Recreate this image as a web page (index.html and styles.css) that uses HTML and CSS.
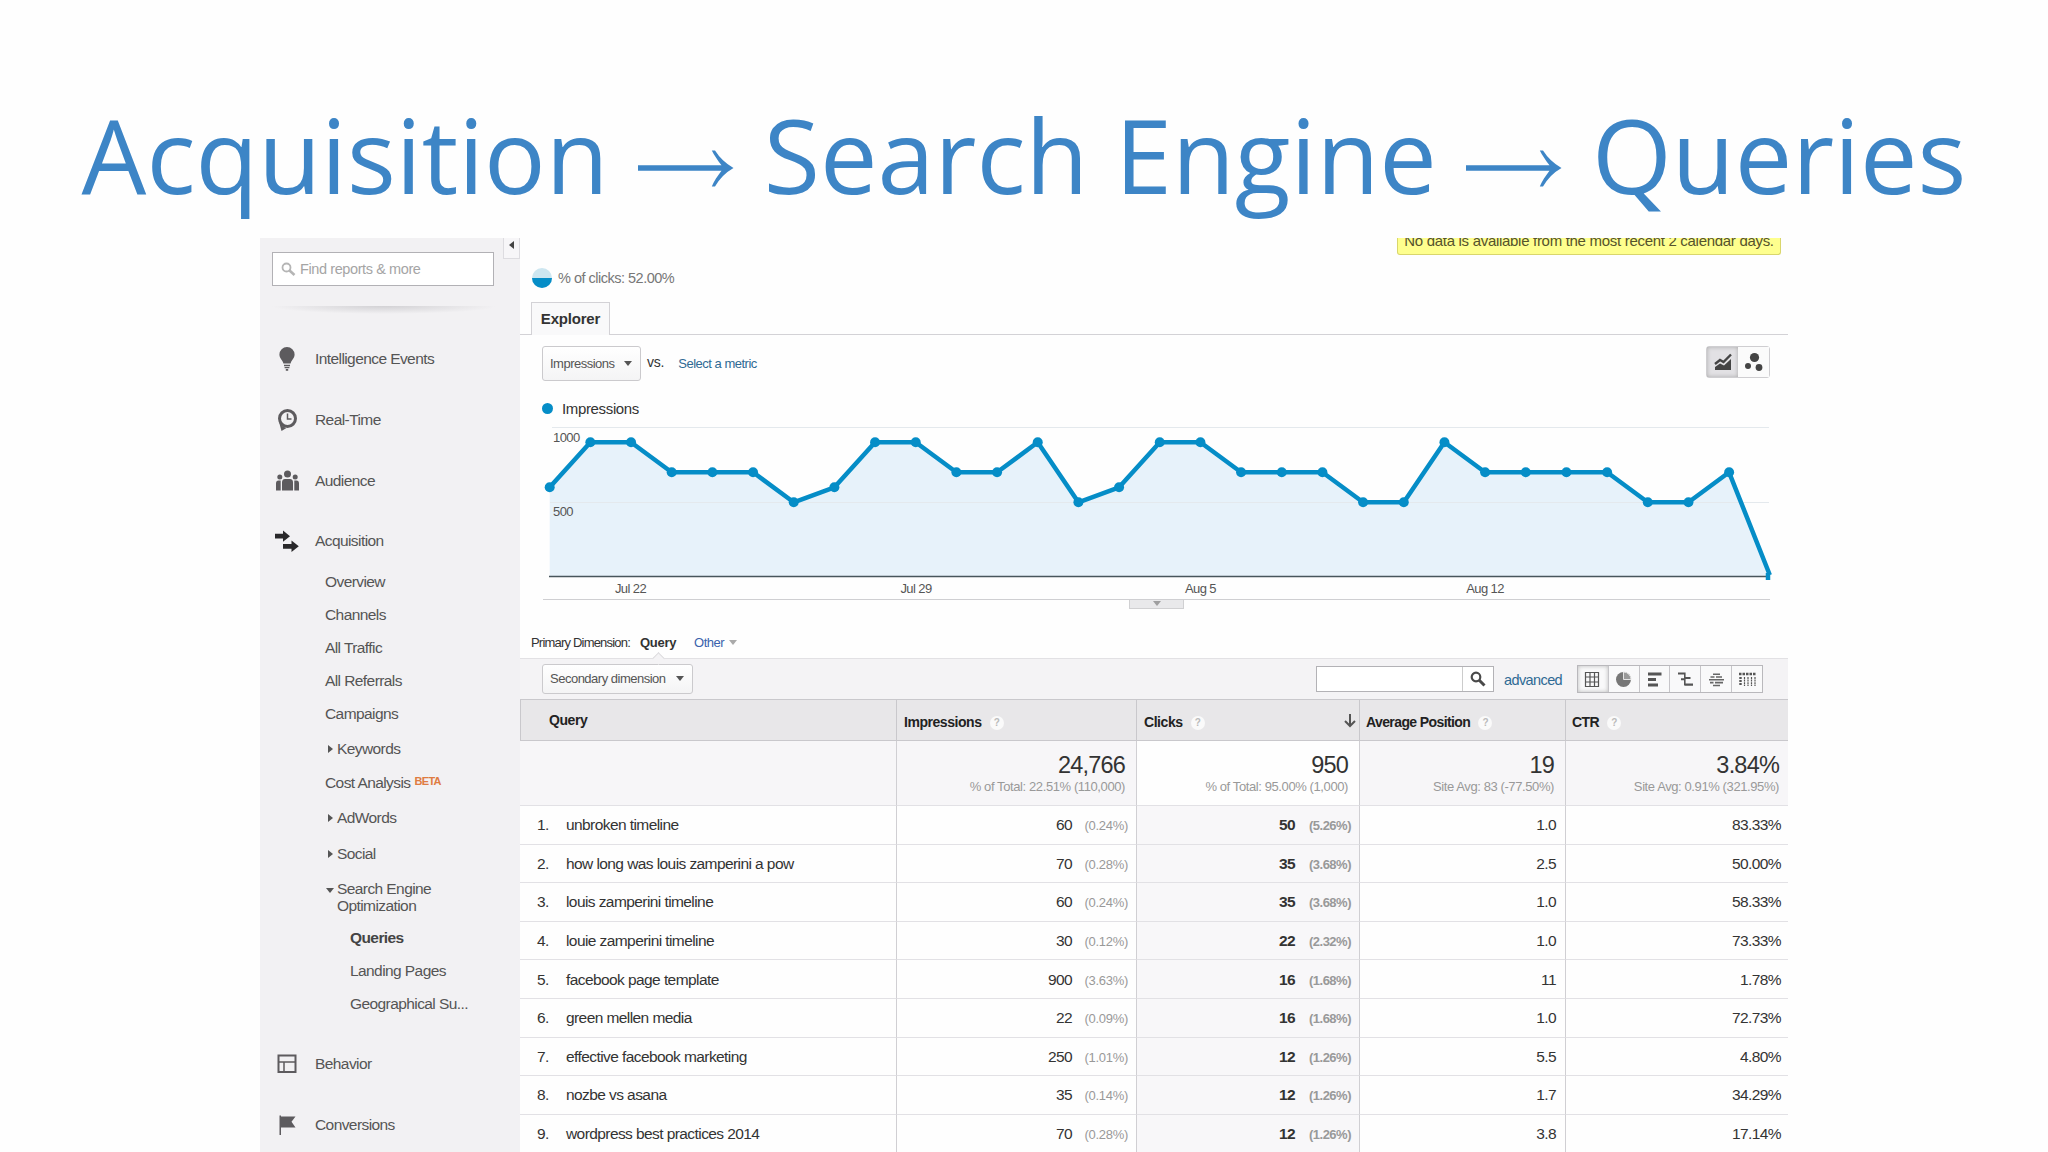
FILE: index.html
```html
<!DOCTYPE html>
<html lang="en">
<head>
  <meta charset="UTF-8">
  <meta name="viewport" content="width=device-width,initial-scale=1.0">
  <title>Acquisition → Search Engine → Queries</title>
  <link rel="stylesheet" href="styles.css">
</head>
<body>

  <h1>
    Acquisition
    <svg class="arrow" width="102" height="46" viewBox="0 0 102 46"><path d="M3 17.300h83.500C82.500 12 79 7 76.800 2.500H80Q87 13.500 98.500 20 87 26.500 80 38.500h-3.200C79 33 82.500 28 86.500 22.700H3z"/></svg>
    Search Engine
    <svg class="arrow" width="102" height="46" viewBox="0 0 102 46"><path d="M3 17.300h83.500C82.500 12 79 7 76.800 2.500H80Q87 13.500 98.500 20 87 26.500 80 38.500h-3.200C79 33 82.500 28 86.500 22.700H3z"/></svg>
    Queries
  </h1>

  <div class="app">
    <!-- Sidebar -->
    <aside class="sidebar">
      <div class="collapse"><svg width="5" height="8" viewBox="0 0 5 8"><path d="M5 0v8L0 4z" fill="#444"/></svg></div>
      <div class="find">
        <svg width="15" height="15" viewBox="0 0 15 15" fill="none" stroke="#b5b5b5"><circle cx="5.5" cy="5.5" r="4" stroke-width="1.8"/><path d="M8.5 8.5l5 4.5" stroke-width="2.6"/></svg>
        <span>Find reports &amp; more</span>
      </div>
      <div class="shade"></div>

      <nav>
        <div class="nav-item">
          <svg width="24" height="24" viewBox="0 0 24 24" fill="#5d5b5e"><path d="M12 0a7.6 7.6 0 0 1 7.6 7.6c0 3.6-3 5.400-4 8.800H8.400C7.400 13 4.400 11.200 4.400 7.600A7.600 7.600 0 0 1 12 0zM9 17.800h6v1.400H9zM9.600 20h4.800v1.200H9.600zM10.800 22h2.400v1.800h-2.400z"/></svg>
          Intelligence Events
        </div>
        <div class="nav-item">
          <svg width="24" height="24" viewBox="0 0 24 24"><circle cx="12.500" cy="10.500" r="8" fill="none" stroke="#5d5b5e" stroke-width="3"/><path d="M4 14l4 4.500 3.500 1.500-5 3z" fill="#5d5b5e"/><path d="M12.500 5.500v5.500h4" fill="none" stroke="#5d5b5e" stroke-width="1.500"/></svg>
          Real-Time
        </div>
        <div class="nav-item">
          <svg width="24" height="24" viewBox="0 0 24 24" fill="#5d5b5e"><circle cx="12.500" cy="5" r="3.500"/><circle cx="4.800" cy="8" r="2.500"/><circle cx="20.200" cy="8" r="2.500"/><path d="M7 21.500v-8q0-3.500 3-3.500h5q3 0 3 3.500v8zM1 21.500v-7q0-3 2.500-3h2.200v10zM24 21.500v-7q0-3-2.500-3h-2.200v10z"/></svg>
          Audience
        </div>
        <div class="nav-item open">
          <svg width="24" height="24" viewBox="0 0 24 24" fill="#29282a"><path d="M0 4.800h8V1.500l7 5.700-7 5.600V9.600H0zM8 15h8.500v-3.500l7.300 5.800-7.300 5.700v-3.300H8z"/></svg>
          Acquisition
        </div>
        <ul class="sub">
          <li>Overview</li>
          <li>Channels</li>
          <li>All Traffic</li>
          <li>All Referrals</li>
          <li>Campaigns</li>
          <li class="group"><i class="tri-right"></i>Keywords</li>
          <li class="cost">Cost Analysis<b class="beta">BETA</b></li>
          <li class="group"><i class="tri-right"></i>AdWords</li>
          <li class="group"><i class="tri-right"></i>Social</li>
          <li class="group seo"><i class="tri-down"></i><span>Search Engine<br>Optimization</span></li>
          <li class="leaf active">Queries</li>
          <li class="leaf">Landing Pages</li>
          <li class="leaf">Geographical Su...</li>
        </ul>
        <div class="nav-item">
          <svg width="24" height="24" viewBox="0 0 24 24" fill="none" stroke="#5d5b5e"><rect x="3.500" y="3.500" width="17" height="16.500" stroke-width="2"/><path d="M3 10h18M9 10v10" stroke-width="1.500"/></svg>
          Behavior
        </div>
        <div class="nav-item">
          <svg width="24" height="24" viewBox="0 0 24 24" fill="#5d5b5e"><path d="M4.500 2.500H6V22H4.500z"/><path d="M6 3.500h14.500l-4 5.300 4 5.700H6z"/></svg>
          Conversions
        </div>
      </nav>
    </aside>

    <!-- Report -->
    <main>
      <div class="top">
        <div class="clicks">
          <svg width="20" height="20" viewBox="0 0 20 20"><circle cx="10" cy="10" r="10" fill="#cde6f0"/><path d="M0 10a10 10 0 0 0 20 0z" fill="#058dc7"/></svg>
          % of clicks: 52.00%
        </div>
        <div class="notice">No data is available from the most recent 2 calendar days.</div>
      </div>
      <div class="tabs"><div class="tab">Explorer</div></div>

      <div class="controls">
        <div class="btn metric">Impressions <i class="caret"></i></div>
        <span class="vs">vs.</span>
        <a class="select">Select a metric</a>
        <div class="toggle">
          <div class="on"><svg width="18" height="18" viewBox="0 0 18 18"><path d="M1 11l5-4 3.500 2L17 1.500" fill="none" stroke="#444" stroke-width="2.400"/><path d="M1 17v-3l5-3.500 4 2L17 6v11z" fill="#444"/></svg></div>
          <div><svg width="20" height="20" viewBox="0 0 20 20" fill="#444"><circle cx="10.500" cy="5.500" r="4.600"/><circle cx="4" cy="14" r="3"/><circle cx="15" cy="15.500" r="3.400"/></svg></div>
        </div>
      </div>

      <div class="legend"><i></i>Impressions</div>
      <svg class="chart" id="chart" width="1268" height="180" viewBox="520 420 1268 180"></svg>
      <div class="handle"><i class="caret"></i></div>

      <div class="dimension">
        <span>Primary Dimension:</span>
        <b>Query</b>
        <a>Other</a><i class="caret"></i>
      </div>

      <div class="toolbar">
        <div class="btn secondary">Secondary dimension <i class="caret"></i></div>
        <div class="search">
          <span></span>
          <svg width="16" height="16" viewBox="0 0 16 16" fill="none" stroke="#4a4a4a"><circle cx="6" cy="6" r="4.300" stroke-width="2.200"/><path d="M9 9l5.500 5.500" stroke-width="3"/></svg>
        </div>
        <a class="advanced">advanced</a>
        <div class="views">
          <div class="on"><svg width="17" height="17" viewBox="0 0 17 17" fill="none" stroke="#555"><path d="M1.500 1.500h13v14h-13zM1.500 6h13M1.500 11h13M6 1.500v14M10.500 1.500v14" stroke-width="1.200"/></svg></div>
          <div><svg width="17" height="17" viewBox="0 0 17 17"><circle cx="8.500" cy="8.500" r="7.500" fill="#777"/><path d="M8.500 1v7.500H16A7.500 7.500 0 0 0 8.500 1z" stroke="#e4e4e4" stroke-width="1" fill="#999"/></svg></div>
          <div><svg width="17" height="17" viewBox="0 0 17 17" fill="#555"><path d="M2 1.500h13.500v3H2zM2 7h8v3H2zM2 12.500h10v3H2z"/></svg></div>
          <div><svg width="17" height="17" viewBox="0 0 17 17" fill="#555"><path d="M1 1.500h7v2H1zM7 1.500h1.600v13H7zM4 7.200h3v2H4zM8.500 6h5v2h-5zM8 12.500h8v2.200H8z"/></svg></div>
          <div><svg width="17" height="17" viewBox="0 0 17 17" fill="#666"><path d="M5 2.500h7v1.400H5zM2.500 5.200h4v1.600h-4zM8 5.200h6v1.600H8zM1 8h15v1.400H1zM2 10.800h3.500v1.800H2zM7 10.800h8v1.800H7zM5 13.800h7v1.400H5z"/></svg></div>
          <div><svg width="17" height="17" viewBox="0 0 17 17" fill="none" stroke="#555"><path d="M0 3h17" stroke-width="2.600" stroke-dasharray="2.500 1"/><path d="M1.500 6v9" stroke-width="2.400" stroke-dasharray="2 1"/><path d="M5.500 6v9M9 6v9M12.500 6v9M16 6v9" stroke-width="1.200" stroke-dasharray="2 .6"/></svg></div>
        </div>
      </div>

      <table>
        <colgroup><col class="c-query"><col class="c-imp"><col class="c-clicks"><col class="c-pos"><col class="c-ctr"></colgroup>
        <thead>
          <tr>
            <th class="first">Query</th>
            <th>Impressions<i class="help">?</i></th>
            <th>Clicks<i class="help">?</i><svg class="sort" width="12" height="14" viewBox="0 0 12 14"><path d="M6 0v12M1 7l5 5 5-5" fill="none" stroke="#555" stroke-width="2"/></svg></th>
            <th>Average Position<i class="help">?</i></th>
            <th>CTR<i class="help">?</i></th>
          </tr>
        </thead>
        <tbody id="rows">
          <tr class="total">
            <td></td>
            <td><strong>24,766</strong><small>% of Total: 22.51% (110,000)</small></td>
            <td><strong>950</strong><small>% of Total: 95.00% (1,000)</small></td>
            <td><strong>19</strong><small>Site Avg: 83 (-77.50%)</small></td>
            <td><strong>3.84%</strong><small>Site Avg: 0.91% (321.95%)</small></td>
          </tr>
        </tbody>
      </table>
    </main>
  </div>

  <script src="script.js"></script>
</body>
</html>
```

FILE: styles.css
```css
:root {
  --blue: #058dc7;
  --link: #2f6a94;
  --panel: #f2f1f3;
  --line: #d3d2d6;
}

* {
  margin: 0;
  padding: 0;
  box-sizing: border-box;
}

body {
  width: 2048px;
  height: 1152px;
  overflow: hidden;
  background: #fefefe;
  font-family: "Liberation Sans", Arial, sans-serif;
  font-size: 15.5px;
  letter-spacing: -0.58px;
  color: #333;
}

ul {
  list-style: none;
}

svg {
  display: block;
  flex: none;
}

h1 {
  height: 238px;
  padding-top: 84px;
  font: 400 102.5px/140px "Open Sans", "Noto Sans", sans-serif;
  letter-spacing: 0;
  text-align: center;
  white-space: nowrap;
  color: #3d85c6;
}

.arrow {
  display: inline-block;
  vertical-align: baseline;
  fill: #3d85c6;
}

.app {
  display: flex;
  width: 1528px;
  height: 914px;
  margin-left: 260px;
  overflow: hidden;
}

/* Sidebar */
.sidebar {
  position: relative;
  width: 260px;
  flex: none;
  padding-top: 14px;
  background: var(--panel);
  color: #555;
}

.collapse {
  position: absolute;
  top: 0;
  right: 0;
  width: 17px;
  height: 21px;
  padding: 3px 0 0 5px;
  border: 1px solid #dddce0;
  border-top: 0;
  background: #f7f6f8;
}

.find {
  display: flex;
  align-items: center;
  gap: 4px;
  width: 222px;
  height: 34px;
  margin-left: 12px;
  padding-left: 8px;
  border: 1px solid #b2b1b5;
  background: #fff;
  font-size: 14.5px;
  letter-spacing: -0.4px;
  color: #a5a5a5;
}

.shade {
  width: 228px;
  height: 8px;
  margin: 20px 0 22px 10px;
  background: radial-gradient(ellipse at top, #d2d1d4 0%, var(--panel) 70%);
}

.nav-item {
  display: flex;
  align-items: center;
  gap: 16px;
  height: 46px;
  margin: 6px 0 14.8px 15px;
}

nav .nav-item + .nav-item {
  margin-top: 0;
}

.nav-item.open {
  margin-bottom: 0;
}

.sub {
  padding-top: 1px;
}

.sub + .nav-item {
  margin-top: 21px;
}

.sub li {
  display: flex;
  align-items: center;
  height: 33px;
  padding-left: 65px;
}

.sub .group {
  height: 36px;
  padding: 1px 0 0 68px;
}

.sub .seo {
  height: 50px;
  line-height: 17px;
}

.sub .leaf {
  padding-left: 90px;
}

.sub .active {
  font-weight: bold;
  color: #444;
}

.beta {
  margin: -4px 0 0 4px;
  font-size: 11px;
  letter-spacing: -0.7px;
  color: #df7c42;
}

.tri-right {
  width: 9px;
}

.tri-right::before {
  content: "";
  display: block;
  width: 0;
  border: 4px solid transparent;
  border-left: 5px solid #555;
  border-right: 0;
}

.tri-down {
  width: 11px;
  height: 18px;
  margin-left: -2px;
}

.tri-down::before,
.caret::before {
  content: "";
  display: block;
  width: 0;
  border: 4px solid transparent;
  border-top: 5px solid #555;
  border-bottom: 0;
}

/* Report */
main {
  width: 1268px;
  flex: none;
}

.top {
  display: flex;
  justify-content: space-between;
  height: 64px;
  padding: 0 7px 0 12px;
}

.clicks {
  display: flex;
  gap: 6px;
  align-items: center;
  height: 20px;
  margin-top: 30px;
  letter-spacing: -0.5px;
  font-size: 14.5px;
  color: #777;
}

.notice {
  width: 384px;
  height: 17px;
  border: 1px solid #d9d66c;
  border-top: 0;
  border-radius: 0 0 3px 3px;
  background: #feff8e;
  line-height: 6px;
  font-size: 15px;
  letter-spacing: -0.3px;
  text-align: center;
  white-space: nowrap;
  color: #55532c;
  overflow: hidden;
}

.tabs {
  display: flex;
  height: 33px;
  padding-left: 11px;
  border-bottom: 1px solid var(--line);
}

.tab {
  width: 79px;
  height: 33px;
  border: 1px solid var(--line);
  border-bottom: 0;
  background: #f9f9fa;
  line-height: 32px;
  text-align: center;
  font-weight: bold;
  letter-spacing: -0.2px;
  font-size: 15px;
  color: #333;
}

.controls {
  display: flex;
  height: 58px;
  padding: 11px 18px 0 22px;
}

.btn {
  display: flex;
  align-items: center;
  justify-content: space-between;
  padding: 0 8px 0 7px;
  border: 1px solid #cbcacd;
  border-radius: 3px;
  background: linear-gradient(#fff, #f4f4f5);
  font-size: 13px;
  white-space: nowrap;
  color: #555;
}

.metric {
  width: 99px;
  height: 35px;
  letter-spacing: -0.5px;
}

.vs {
  margin: 8px 14px 0 6px;
  letter-spacing: -0.2px;
  font-size: 14px;
}

.select {
  margin-top: 10px;
  font-size: 13px;
  letter-spacing: -0.5px;
  color: var(--link);
}

.toggle {
  display: flex;
  width: 64px;
  height: 32px;
  margin-left: auto;
  border: 1px solid #cfced1;
  border-radius: 3px;
}

.toggle div {
  display: grid;
  place-items: center;
  flex: 1;
  background: #fbfbfb;
}

.toggle .on {
  background: #e2e1e4;
  box-shadow: inset 0 0 4px #aaa;
}

.legend {
  display: flex;
  align-items: center;
  gap: 9px;
  height: 34px;
  padding: 0 0 3px 22px;
  letter-spacing: -0.35px;
  font-size: 15px;
}

.legend i {
  width: 11px;
  height: 11px;
  border-radius: 50%;
  background: var(--blue);
}

.chart {
  margin-top: -7px;
  font-size: 13px;
  letter-spacing: -0.6px;
  fill: #555;
}

.chart .grid {
  stroke: #e4e9ed;
}

.chart .area {
  fill: #e7f2fa;
}

.chart .line {
  fill: none;
  stroke: var(--blue);
  stroke-width: 4.5;
  stroke-linejoin: round;
}

.chart .dot {
  fill: var(--blue);
}

.chart .axis {
  stroke: #48555c;
  stroke-width: 1.3;
}

.chart .rule {
  stroke: #cfcfd2;
}

.handle {
  display: grid;
  justify-items: center;
  width: 55px;
  height: 10px;
  margin: -1px 0 0 609px;
  padding-top: 2px;
  border: 1px solid #d0d0d2;
  border-top: 0;
  background: #e9e9eb;
}

.dimension {
  display: flex;
  align-items: center;
  height: 49px;
  padding: 17px 0 0 11px;
  font-size: 13px;
  letter-spacing: -0.8px;
}

.dimension b {
  margin-left: 10px;
  letter-spacing: -0.3px;
}

.dimension a {
  margin: 0 5px 0 18px;
  letter-spacing: -0.5px;
  color: #3b62ac;
}

.dimension .caret,
.handle .caret {
  opacity: 0.5;
}

.toolbar {
  position: relative;
  display: flex;
  align-items: center;
  height: 41px;
  padding: 0 25px 0 22px;
  border-top: 1px solid #e2e1e4;
  background: #f4f3f5;
}

/* notch under the selected dimension */
.toolbar::before {
  content: "";
  position: absolute;
  left: 134px;
  top: -5px;
  width: 8px;
  height: 8px;
  border: 1px solid #dcdbde;
  border-width: 1px 0 0 1px;
  background: #f4f3f5;
  transform: rotate(45deg);
}

.secondary {
  width: 151px;
  height: 30px;
  margin-top: -1px;
  font-size: 13px;
  letter-spacing: -0.5px;
}

.search {
  display: flex;
  align-items: center;
  width: 178px;
  height: 26px;
  margin: 0 10px 0 auto;
  border: 1px solid #b3b2b6;
  background: #fff;
}

.search span {
  width: 146px;
  height: 24px;
  margin-right: 7px;
  border-right: 1px solid #ccc;
}

.advanced {
  width: 59px;
  margin: 2px 14px 0 0;
  font-size: 14.5px;
  letter-spacing: -0.6px;
  color: var(--link);
}

.views {
  display: flex;
  width: 186px;
  height: 28px;
  border: 1px solid #b9b8bc;
}

.views div {
  display: grid;
  place-items: center;
  flex: 1;
  border-left: 1px solid #c6c5c9;
  background: #f9f9fa;
}

.views div:first-child {
  border-left: 0;
}

.views .on {
  box-shadow: inset 0 0 4px #bbb;
}

table {
  width: 1268px;
  table-layout: fixed;
  border-collapse: separate;
  border-spacing: 0;
}

.c-query { width: 377px; }
.c-imp { width: 240px; }
.c-clicks { width: 223px; }
.c-pos { width: 206px; }
.c-ctr { width: 222px; }

th {
  position: relative;
  height: 42px;
  padding: 3px 0 0 7px;
  border: 1px solid #c9c8cc;
  border-left: 0;
  background: #e8e7e9;
  text-align: left;
  font-size: 14px;
  letter-spacing: -0.45px;
  color: #222;
}

th.first {
  padding: 0 0 0 28px;
  border-left: 1px solid #c9c8cc;
}

th:nth-child(n+4) {
  padding-left: 6px;
  letter-spacing: -0.6px;
}

th:last-child {
  border-right: 0;
}

.help {
  display: inline-block;
  width: 14px;
  height: 14px;
  margin-left: 8px;
  border-radius: 50%;
  background: #fafafa;
  font: bold 10px/14px "Liberation Sans", sans-serif;
  text-align: center;
  vertical-align: 1px;
  color: #bbb;
}

.sort {
  position: absolute;
  right: 3px;
  top: 14px;
}

td {
  height: 38.6px;
  border-right: 1px solid #d0cfd3;
  border-bottom: 1px solid #e2e1e5;
  text-align: right;
  white-space: nowrap;
  padding: 1px 8px 0 0;
  background: #fefefe;
}

td:first-child {
  text-align: left;
  padding-left: 17px;
  color: #333;
}

td:nth-child(3) {
  background: #f8f7f9;
}

td:nth-child(4) {
  padding-right: 9px;
}

td:last-child {
  border-right: 0;
  padding-right: 7px;
}

.num {
  display: inline-block;
  width: 29px;
}

.pct {
  display: inline-block;
  width: 56px;
  font-size: 13px;
  letter-spacing: -0.3px;
  color: #999;
}

b .pct {
  letter-spacing: -0.5px;
}

.total td {
  height: 65px;
  background: #f7f6f8;
  padding-right: 11px;
}

.total td:nth-child(3) {
  background: #fefefe;
}

.total td:last-child {
  padding-right: 9px;
}

.total strong {
  display: block;
  font-size: 23.5px;
  line-height: 26px;
  font-weight: normal;
  letter-spacing: -0.8px;
}

.total small {
  display: block;
  font-size: 13px;
  line-height: 17px;
  letter-spacing: -0.4px;
  color: #999;
}
```

FILE: script.js
```js
const rows = [
  ['unbroken timeline', '60', '0.24%', '50', '5.26%', '1.0', '83.33%'],
  ['how long was louis zamperini a pow', '70', '0.28%', '35', '3.68%', '2.5', '50.00%'],
  ['louis zamperini timeline', '60', '0.24%', '35', '3.68%', '1.0', '58.33%'],
  ['louie zamperini timeline', '30', '0.12%', '22', '2.32%', '1.0', '73.33%'],
  ['facebook page template', '900', '3.63%', '16', '1.68%', '11', '1.78%'],
  ['green mellen media', '22', '0.09%', '16', '1.68%', '1.0', '72.73%'],
  ['effective facebook marketing', '250', '1.01%', '12', '1.26%', '5.5', '4.80%'],
  ['nozbe vs asana', '35', '0.14%', '12', '1.26%', '1.7', '34.29%'],
  ['wordpress best practices 2014', '70', '0.28%', '12', '1.26%', '3.8', '17.14%']
];

let html = '';
rows.forEach((r, i) => {
  html += `
    <tr>
      <td><span class="num">${i + 1}.</span>${r[0]}</td>
      <td>${r[1]}<span class="pct">(${r[2]})</span></td>
      <td><b>${r[3]}<span class="pct">(${r[4]})</span></b></td>
      <td>${r[5]}</td>
      <td>${r[6]}</td>
    </tr>
  `;
});
document.getElementById('rows').insertAdjacentHTML('beforeend', html);

// Impressions per day
const values = [600, 900, 900, 700, 700, 700, 500, 600, 900, 900, 700, 700, 900, 500, 600, 900,
  900, 700, 700, 700, 500, 500, 900, 700, 700, 700, 700, 500, 500, 700, 0];
const points = values.map((v, i) => [549.7 + i * 40.67, v ? 577.3 - v * 0.15 : 575]);
const line = points.map(p => p.map(n => n.toFixed(1)).join(',')).join(' ');
const dates = [['Jul 22', 630.5], ['Jul 29', 916], ['Aug 5', 1200.5], ['Aug 12', 1485]];

document.getElementById('chart').innerHTML = `
  <path class="grid" d="M552 427.500H1769"/>
  <polygon class="area" points="549.7,576 ${line} 1770,576"/>
  <path class="grid" d="M550 502.500H1769"/>
  <path class="axis" d="M549 576.500H1770"/>
  <polyline class="line" points="${line}"/>
  ${points.slice(0, -1).map(p => `<circle class="dot" cx="${p[0]}" cy="${p[1]}" r="5"/>`).join('')}
  <path class="line" d="M1768 573v7"/>
  <text x="553" y="442">1000</text>
  <text x="553" y="516">500</text>
  ${dates.map(d => `<text x="${d[1]}" y="593" text-anchor="middle">${d[0]}</text>`).join('')}
  <path class="rule" d="M543 599.500H1770"/>
`;
```
